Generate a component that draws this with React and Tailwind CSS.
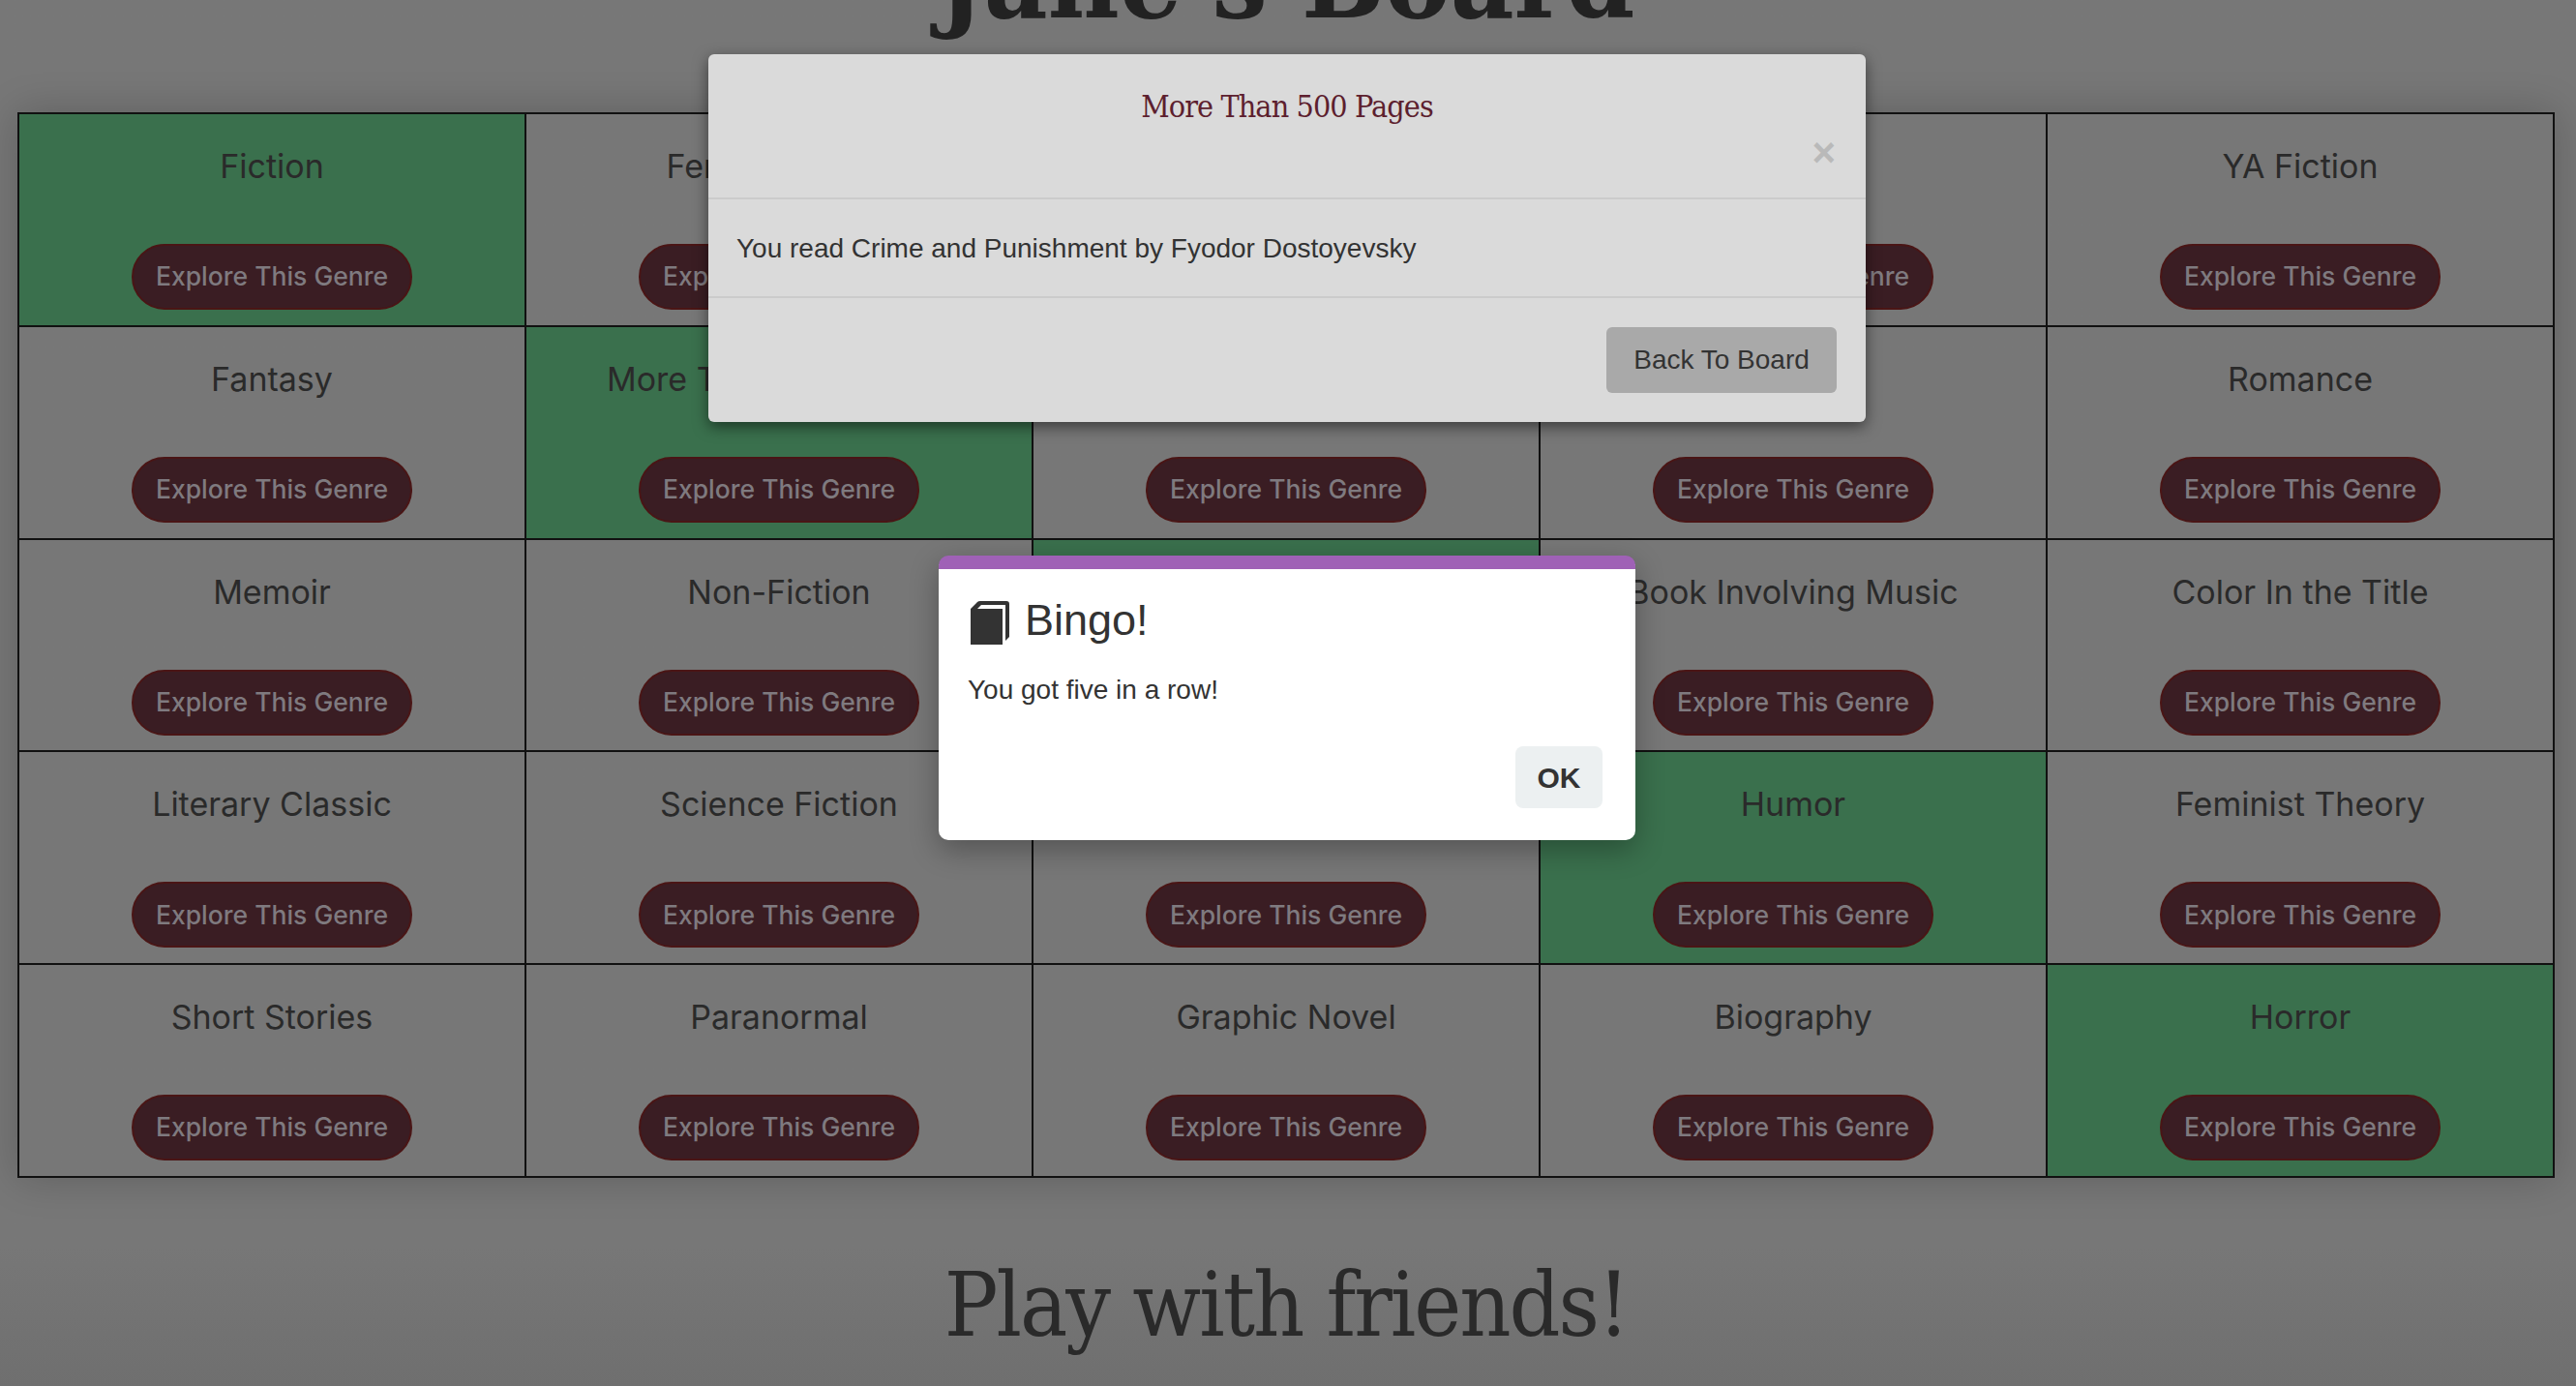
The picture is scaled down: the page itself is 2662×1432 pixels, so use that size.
import React from 'react';

const slab = "font-['DejaVu_Serif_Condensed','DejaVu_Serif',serif]";
const genre = "font-['Inter','Roboto',sans-serif]";
const helvetica = "font-['Liberation_Sans',Arial,sans-serif]";

const squares = [
  ['Fiction', true], ['Female Author'], ['Mystery'], ['Poetry'], ['YA Fiction'],
  ['Fantasy'], ['More Than 500 Pages', true], ['Historical Fiction'], ['Self-Help'], ['Romance'],
  ['Memoir'], ['Non-Fiction'], ['Free Space', true], ['Book Involving Music'], ['Color In the Title'],
  ['Literary Classic'], ['Science Fiction'], ['Book Club Pick'], ['Humor', true], ['Feminist Theory'],
  ['Short Stories'], ['Paranormal'], ['Graphic Novel'], ['Biography'], ['Horror', true],
];

const BookIcon = () => (
  <svg className="w-[40px] h-[45px] shrink-0" viewBox="0 0 40 45" fill="#333">
    <path d="M0 45 V8 L7 1 Q8 0 10 0 H37 Q40 0 40 3 V37 L36 41 V4 H11 L7 8 H33 V45 Z" />
  </svg>
);

const Square = ({ title, done }) => (
  <div className={`h-[219.8px] border-r-2 border-b-2 border-[#111] flex flex-col items-center pt-[34px] ${done ? 'bg-[#3a704d]' : ''}`}>
    <div className={`${genre} text-[34px] leading-[40px] text-[#2a2a2a]`}>{title}</div>
    <button className={`${genre} mt-[60px] w-[290px] h-[68px] rounded-[34px] bg-[#3a1d23] border-2 border-[#4a1515] text-[26.5px] font-medium text-[#7f7a7f]`}>
      Explore This Genre
    </button>
  </div>
);

export default function App() {
  return (
    <div className="relative h-screen overflow-hidden bg-gradient-to-b from-[#777777] via-[#777777] via-90% to-[#6f6f6f]">
      <div className="pl-[18px] pr-[22px]">
        <h1 className={`${slab} -mt-[79px] h-[195px] text-center text-[113px] font-bold leading-[116px] text-[#222]`}>Jane's Board</h1>
        <div className="grid grid-cols-5 border-t-2 border-l-2 border-[#111] shadow-[0_0_40px_rgba(0,0,0,0.2)]">
          {squares.map(([title, done]) => (
            <Square key={title} title={title} done={done} />
          ))}
        </div>
        <h2 className={`${slab} mt-[77px] text-center text-[92px] tracking-[-2px] leading-[110px] text-[#2a2a2a]`}>Play with friends!</h2>
      </div>

      {/* Book details dialog */}
      <div className={`${helvetica} absolute left-[732px] top-[56px] w-[1196px] h-[380px] rounded-[6px] bg-[#dadada] shadow-[0_5px_15px_rgba(0,0,0,0.5)] text-[#333]`}>
        <div className="relative h-[150px] border-b-2 border-[#cbcbcb] pt-[32px] text-center">
          <div className={`${slab} text-[32px] tracking-[-0.9px] leading-[44px] text-[#5d1f2f]`}>More Than 500 Pages</div>
          <span className="absolute right-[31px] top-[81px] text-[42px] leading-[42px] font-bold text-[#b9b9b9]">×</span>
        </div>
        <div className="h-[102px] border-b-2 border-[#cbcbcb] px-[29px] pt-[31px] text-[28px] leading-[40px]">
          You read Crime and Punishment by Fyodor Dostoyevsky
        </div>
        <div className="flex justify-end pt-[30px] pr-[30px]">
          <button className="w-[238px] h-[68px] rounded-[6px] bg-[#a9a9a9] text-[28px] text-[#333]">Back To Board</button>
        </div>
      </div>

      {/* Bingo alert */}
      <div className={`${helvetica} absolute left-[970px] top-[574px] w-[720px] h-[294px] rounded-[10px] bg-white border-t-[14px] border-[#9f61b6] shadow-[0_10px_30px_rgba(0,0,0,0.3)] text-[#333]`}>
        <div className="flex items-center gap-[16px] pl-[33px] pt-[33px]">
          <BookIcon />
          <span className="-mt-[5px] text-[45px] leading-[46px]">Bingo!</span>
        </div>
        <div className="pl-[30px] pt-[27px] text-[28px] leading-[40px]">You got five in a row!</div>
        <div className="flex justify-end pr-[34px] pt-[38px]">
          <button className="w-[90px] h-[64px] rounded-[8px] bg-[#ecf0f1] text-[30px] font-bold text-[#333]">OK</button>
        </div>
      </div>
    </div>
  );
}
